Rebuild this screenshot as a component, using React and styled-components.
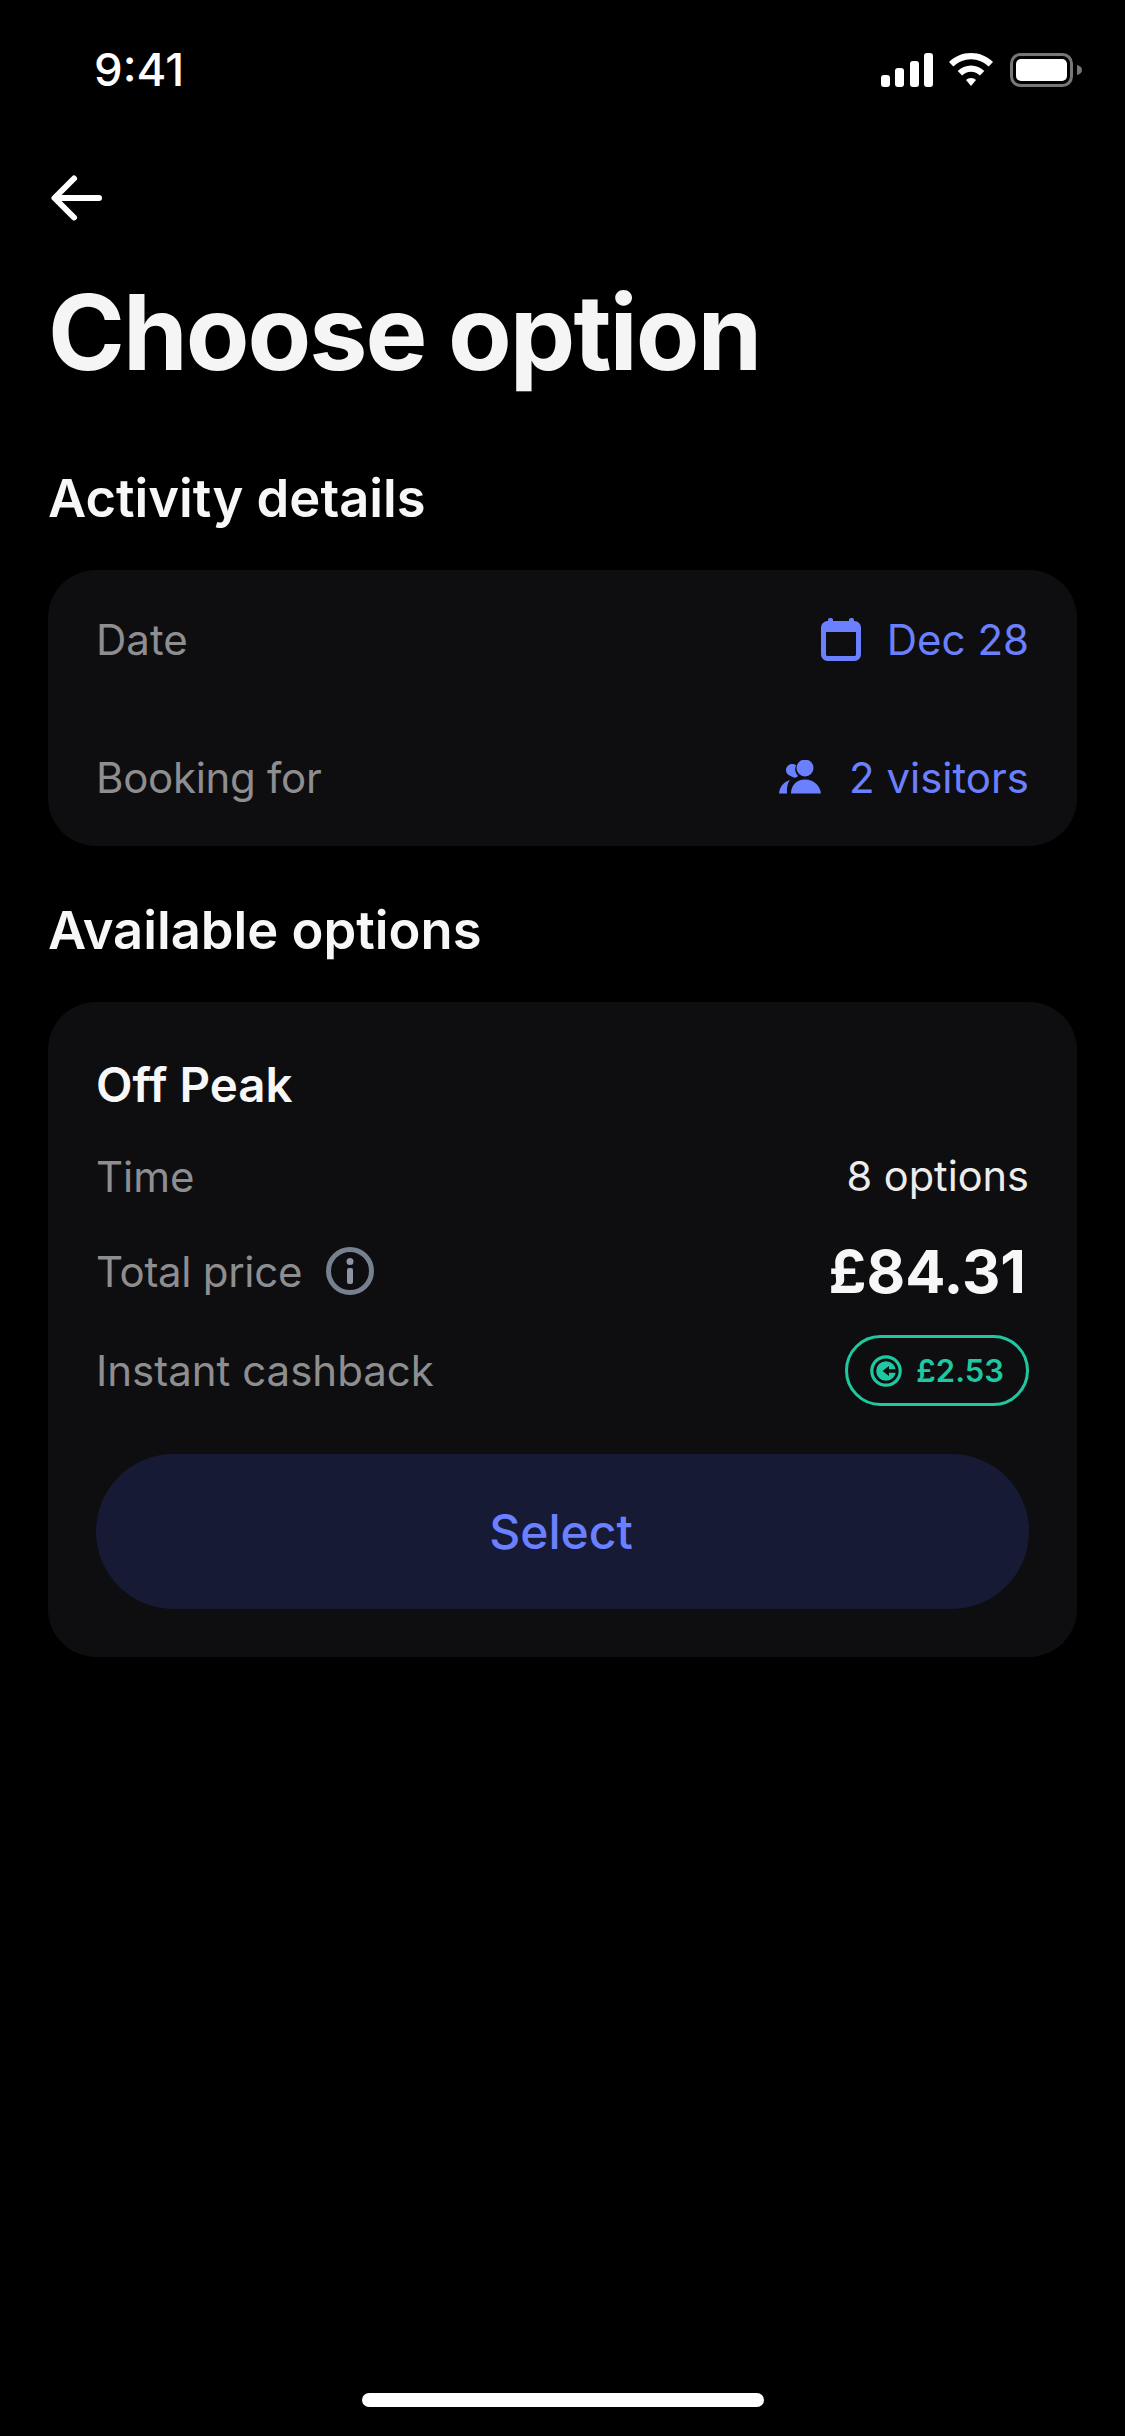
import styled, { createGlobalStyle } from "styled-components";

const GlobalStyle = createGlobalStyle`
  html, body {
    margin: 0;
    padding: 0;
    background: #000;
  }
`;

const Screen = styled.div`
  width: 1125px;
  height: 2436px;
  box-sizing: border-box;
  overflow: hidden;
  display: flex;
  flex-direction: column;
  background: #000;
  color: #fff;
  font-family: Inter, "Liberation Sans", sans-serif;
`;

const StatusBar = styled.div`
  height: 136px;
  flex-shrink: 0;
  box-sizing: border-box;
  padding: 46px 43px 0 94px;
  display: flex;
  justify-content: space-between;
  align-items: flex-start;
`;

const Time = styled.span`
  font-size: 45.5px;
  line-height: 48px;
  font-weight: 500;
`;

const StatusIcons = styled.div`
  display: flex;
  align-items: center;
  margin-top: 7px;
`;

const Content = styled.div`
  padding: 0 48px;
  display: flex;
  flex-direction: column;
`;

const BackButton = styled.div`
  height: 60px;
  margin-top: 32px;
  display: flex;
  align-items: center;
`;

const Title = styled.h1`
  margin: 41px 0 0 0;
  font-size: 104px;
  line-height: 126px;
  font-weight: 700;
  letter-spacing: -2px;
  color: #f5f5f5;
`;

const SectionTitle = styled.h2`
  margin: ${(p) => p.$top}px 0 0;
  font-size: 52.5px;
  line-height: 64px;
  font-weight: 600;
  color: #f7f7f7;
`;

const Card = styled.div`
  margin-top: 40px;
  background: #0e0e10;
  border-radius: 48px;
  padding: ${(p) => p.$padding};
  display: flex;
  flex-direction: column;
`;

const Row = styled.div`
  display: flex;
  justify-content: space-between;
  align-items: center;
  height: ${(p) => p.$height}px;
  margin-top: ${(p) => p.$top || 0}px;
`;

const Label = styled.span`
  display: flex;
  align-items: center;
  gap: 24px;
  font-size: 42px;
  letter-spacing: ${(p) => (p.$tight ? "-0.3px" : "0")};
  color: #8e8e91;
`;

const Accent = styled.span`
  display: flex;
  align-items: center;
  gap: ${(p) => p.$gap}px;
  font-size: 42px;
  color: #6b80ff;
`;

const OptionName = styled.div`
  font-size: 47.5px;
  line-height: 60px;
  font-weight: 600;
  color: #f7f7f7;
`;

const Value = styled.span`
  font-size: 41.5px;
  color: #ececec;
`;

const Price = styled.span`
  margin-right: 3px;
  font-size: 59.5px;
  font-weight: 700;
  color: #f7f7f7;
`;

const Cashback = styled.span`
  box-sizing: border-box;
  height: 71px;
  padding: 0 22px 0 22px;
  border: 3px solid #1fc8a0;
  border-radius: 36px;
  display: flex;
  align-items: center;
  gap: 14px;
  font-size: 31px;
  font-weight: 600;
  color: #1fc8a0;
`;

const SelectButton = styled.button`
  height: 155px;
  margin-top: 48px;
  padding: 0 3px 0 0;
  border: 0;
  border-radius: 78px;
  background: #171a35;
  color: #6b80ff;
  font-family: inherit;
  font-size: 48px;
  font-weight: 500;
`;

const HomeBar = styled.div`
  width: 402px;
  height: 14px;
  margin: auto auto 29px;
  border-radius: 7px;
  background: #fff;
`;

function StatusGlyphs() {
  return (
    <StatusIcons>
      <svg width="52" height="34" viewBox="0 0 52 34" fill="#fff">
        <rect x="0" y="22" width="9" height="12" rx="3" />
        <rect x="14" y="15" width="9" height="19" rx="3" />
        <rect x="29" y="8" width="9" height="26" rx="3" />
        <rect x="43" y="0" width="9" height="34" rx="3" />
      </svg>
      <svg width="46" height="34" viewBox="0 0 46 34" fill="#fff" style={{ marginLeft: 15 }}>
        <path d="M23 0c8.600 0 16.400 3.400 22 9l-4.400 4.600C36 9 29.800 6.200 23 6.200S10 9 5.400 13.600L1 9C6.600 3.400 14.400 0 23 0z" />
        <path d="M23 12.500c5.200 0 9.900 2.100 13.300 5.500l-4.400 4.500c-2.300-2.300-5.400-3.700-8.900-3.700s-6.600 1.400-8.900 3.700L9.700 18c3.400-3.400 8.100-5.500 13.300-5.500z" />
        <path d="M23 25c2 0 3.700.8 5 2l-5 6-5-6c1.300-1.200 3-2 5-2z" />
      </svg>
      <svg width="72" height="34" viewBox="0 0 72 34" style={{ marginLeft: 16 }}>
        <rect x="1.500" y="1.500" width="60" height="31" rx="9" fill="none" stroke="#777" strokeWidth="3" />
        <rect x="6" y="6" width="51" height="22" rx="5" fill="#fff" />
        <path d="M67 12c3 .6 5 2.500 5 5s-2 4.400-5 5z" fill="#777" />
      </svg>
    </StatusIcons>
  );
}

function CalendarIcon() {
  return (
    <svg width="40" height="44" viewBox="0 0 40 44" fill="none">
      <rect x="2.500" y="6.500" width="35" height="35" rx="4" stroke="#6b80ff" strokeWidth="5" />
      <path d="M2 6h36v9H2z" fill="#6b80ff" />
      <rect x="7" y="1" width="5" height="8" rx="2" fill="#6b80ff" />
      <rect x="28" y="1" width="5" height="8" rx="2" fill="#6b80ff" />
    </svg>
  );
}

function VisitorsIcon() {
  return (
    <svg width="42" height="34" viewBox="0 0 42 34" fill="#6b80ff">
      <circle cx="26" cy="8" r="8.500" />
      <path d="M12 33.500c0-8 5.500-14 14-14s15 6 16 14z" />
      <path d="M13 4c1.500 0 3 .5 4 1.300-1.500 3.500-1 7.500 2 10.700-1 1-2.200 1.500-3.500 1.700C10.500 16 7 14 7 10c0-3.300 3-6 6-6z" />
      <path d="M11 20c-2.500 3-3.500 8-3 13.500H0c.5-6.500 4.500-11.500 11-13.500z" />
    </svg>
  );
}

function InfoIcon() {
  return (
    <svg width="48" height="48" viewBox="0 0 48 48" fill="none">
      <circle cx="24" cy="24" r="21.500" stroke="#76808e" strokeWidth="5" />
      <circle cx="24" cy="14.500" r="3.500" fill="#8b95a3" />
      <rect x="21" y="21" width="6" height="16" rx="2" fill="#8b95a3" />
    </svg>
  );
}

function CoinIcon() {
  return (
    <svg width="32" height="32" viewBox="0 0 32 32" fill="none">
      <circle cx="16" cy="16" r="14.200" stroke="#1fc8a0" strokeWidth="3.200" />
      <circle cx="16" cy="16" r="9.800" fill="#1fc8a0" />
      <path d="M26.500 14.300H19V11l-6.500 5 6.500 5v-3.300h7.500z" fill="#0e0e10" />
    </svg>
  );
}

export default function App() {
  return (
    <Screen>
      <GlobalStyle />
      <StatusBar>
        <Time>9:41</Time>
        <StatusGlyphs />
      </StatusBar>
      <Content>
        <BackButton>
          <svg width="56" height="50" viewBox="0 0 56 50" fill="none" stroke="#fff" strokeWidth="6" strokeLinecap="round" strokeLinejoin="round">
            <path d="M51 25H7M26 5.500 6.500 25 26 44.500" />
          </svg>
        </BackButton>
        <Title>Choose option</Title>
        <SectionTitle $top={71}>Activity details</SectionTitle>
        <Card $padding="0 48px">
          <Row $height={138}>
            <Label>Date</Label>
            <Accent $gap={26}>
              <CalendarIcon />
              Dec 28
            </Accent>
          </Row>
          <Row $height={138}>
            <Label $tight>Booking for</Label>
            <Accent $gap={28}>
              <VisitorsIcon />
              2 visitors
            </Accent>
          </Row>
        </Card>
        <SectionTitle $top={52}>Available options</SectionTitle>
        <Card $padding="53px 48px 48px">
          <OptionName>Off Peak</OptionName>
          <Row $height={60} $top={31}>
            <Label>Time</Label>
            <Value>8 options</Value>
          </Row>
          <Row $height={80} $top={25}>
            <Label $tight>
              Total price
              <InfoIcon />
            </Label>
            <Price>£84.31</Price>
          </Row>
          <Row $height={71} $top={24}>
            <Label>Instant cashback</Label>
            <Cashback>
              <CoinIcon />
              £2.53
            </Cashback>
          </Row>
          <SelectButton>Select</SelectButton>
        </Card>
      </Content>
      <HomeBar />
    </Screen>
  );
}
